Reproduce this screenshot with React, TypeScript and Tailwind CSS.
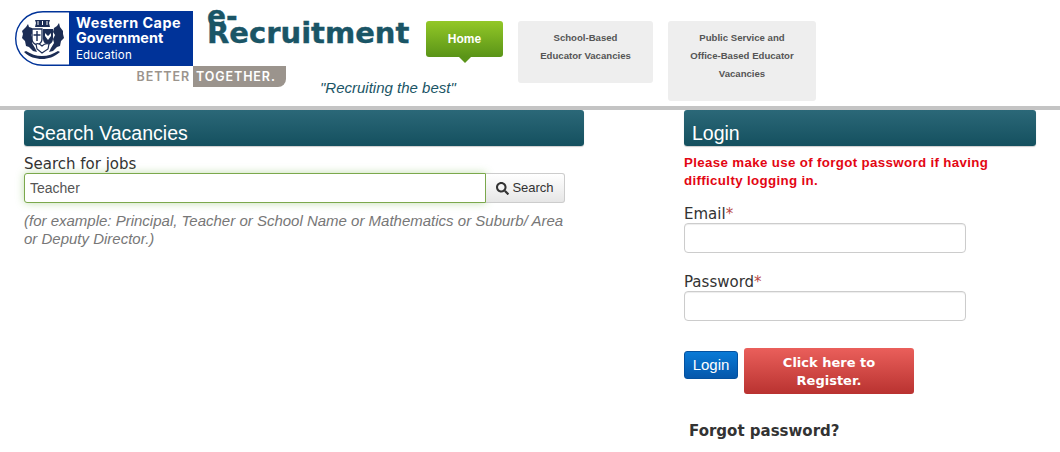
import React from "react";
import { FaSearch } from "react-icons/fa";

const Crest = () => (
  <svg viewBox="0 0 54 55" className="w-[54px] h-[55px] shrink-0">
    <rect width="54" height="55" fill="#fff" />
    <path d="M54 0.7H28C12 0.7 0.7 13 0.7 27.5S12 54.3 28 54.3H54" fill="#fff" stroke="#003399" strokeWidth="1.4" />
    {/* supporters */}
    <path d="M7 20l4-4 2-3 1 3 3 1 1 4-2 3 2 4-1 4 3 5 2 4-4-1-4-4-3-1-1-5-3-3 1-4Z" fill="#1c2d55" />
    <path d="M48 20l-3-4-1-4-2 3-3 2-1 4 2 3-2 4 1 4-3 5-2 4 4-1 4-4 3-1 1-5 3-3-1-4Z" fill="#1c2d55" />
    {/* crown */}
    <path d="M20 9h15l-1 3 1 4H20l1-4Z" fill="#1c2d55" />
    <path d="M23 10v4M27.500 10v4M32 10v4" stroke="#fff" strokeWidth="1" />
    {/* shields */}
    <path d="M17 18h10v10c0 3-2 5-5 6-3-1-5-3-5-6Z" fill="#fff" stroke="#1c2d55" strokeWidth="1.3" />
    <path d="M28 18h10v10c0 3-2 5-5 6-3-1-5-3-5-6Z" fill="#1c2d55" />
    <path d="M22 20v10M18.500 24h7" stroke="#1c2d55" strokeWidth="1.4" />
    <path d="M30 22l3 3 3-3v3l-3 4-3-4Z" fill="#fff" />
    <path d="M21 33c2-1 4 0 6 2 2-2 4-3 7-2l-1 5-6 4-5-4Z" fill="#fff" stroke="#1c2d55" strokeWidth="1.2" />
    {/* motto ribbon */}
    <path d="M9 41c5 5 12 7 18 7s12-2 18-7l-2-1c-5 3-10 5-16 5s-11-2-16-5Z" fill="#1c2d55" />
  </svg>
);

const PanelHeading = ({ title }: { title: string }) => (
  <div className="h-9 rounded-[3px] bg-gradient-to-b from-[#2b6878] to-[#14505f] pl-2 pt-[9px] text-[19.5px] leading-[28px] text-white font-['Liberation_Sans',sans-serif] shadow-[0_1px_1px_rgba(0,0,0,0.2)]">
    {title}
  </div>
);

const Field = ({ label, className }: { label: string; className: string }) => (
  <div className={className}>
    <div className="pt-[2px] text-[15px] leading-[17px] text-[#333] font-['DejaVu_Sans',sans-serif]">
      {label}
      <span className="text-[#b94a48]">*</span>
    </div>
    <div className="h-[30px] w-[282px] rounded-[4px] border border-[#ccc] bg-white shadow-[inset_0_1px_1px_rgba(0,0,0,0.075)]" />
  </div>
);

export default function App() {
  return (
    <div className="w-[1060px] h-[452px] overflow-hidden bg-white font-['Liberation_Sans',sans-serif]">
      {/* Header */}
      <header className="h-[110px] border-b-[4px] border-[#c4c4c4] flex items-start">
        <div className="ml-[15px] mt-[11px] w-[271px] shrink-0">
          <div className="flex w-[178px]">
            <Crest />
            <div className="flex-1 bg-[#003399] text-white pl-[7px] pt-[4px] font-['Inter',sans-serif]">
              <div className="text-[14.4px] font-bold leading-[15px] tracking-[0.45px] whitespace-nowrap">Western Cape</div>
              <div className="text-[14.4px] font-bold leading-[15px]">Government</div>
              <div className="text-[11.5px] leading-[15px] mt-[3px] tracking-[0.2px]">Education</div>
            </div>
          </div>
          <div className="flex h-[21px] font-['Inter',sans-serif] text-[12.5px] font-semibold tracking-[0.9px] leading-[21px]">
            <div className="w-[178px] text-right pr-[3px] text-[#9b948d]">BETTER</div>
            <div className="flex-1 bg-[#9b948d] text-white pl-[3px] rounded-br-[8px] whitespace-nowrap">TOGETHER.</div>
          </div>
        </div>

        <div className="w-[219px] ml-[-79px] mt-[9px] shrink-0">
          <div className="font-['DejaVu_Sans',sans-serif] font-bold text-[29px] leading-[16px] text-[#1a5566] whitespace-nowrap [-webkit-text-stroke:0.4px_#1a5566]">
            <div className="text-[28px]">e-</div>
            <div>Recruitment</div>
          </div>
          <div className="ml-[113px] mt-[38px] italic text-[15px] leading-[18px] text-[#1a5566] whitespace-nowrap">"Recruiting the best"</div>
        </div>

        <div className="ml-0 mt-[21px] w-[77px] relative shrink-0">
          <div className="h-9 rounded-[3px] bg-gradient-to-b from-[#93c827] to-[#5a9418] text-white text-[12px] font-bold leading-9 text-center">Home</div>
          <div className="absolute left-[33px] top-9 w-0 h-0 border-x-[6px] border-x-transparent border-t-[6px] border-t-[#5a9418]" />
        </div>

        <div className="ml-[15px] mt-[21px] h-[62px] w-[135px] rounded-[3px] bg-[#eee] text-center text-[9.6px] font-bold leading-[18px] text-[#555] pt-2 shrink-0">
          School-Based
          <br />
          Educator Vacancies
        </div>

        <div className="ml-[15px] mt-[21px] h-[80px] w-[148px] rounded-[3px] bg-[#eee] text-center text-[9.6px] font-bold leading-[18px] text-[#555] pt-2 shrink-0">
          Public Service and
          <br />
          Office-Based Educator
          <br />
          Vacancies
        </div>
      </header>

      {/* Body */}
      <main className="flex">
        <section className="ml-6 w-[560px] shrink-0">
          <PanelHeading title="Search Vacancies" />
          <div className="mt-[9px] text-[15px] leading-[18px] text-[#333] font-['DejaVu_Sans',sans-serif]">Search for jobs</div>
          <div className="flex">
            <div className="h-[30px] w-[462px] rounded-l-[3px] border border-[#7ba84c] bg-white pl-[5px] text-[14px] leading-[28px] text-[#555] shadow-[0_0_8px_rgba(102,175,60,0.4)] font-['Liberation_Sans',sans-serif]">
              Teacher
            </div>
            <div className="h-[30px] w-[79px] rounded-r-[3px] border border-l-0 border-[#ccc] bg-gradient-to-b from-white to-[#e6e6e6] flex items-center justify-center gap-[3px] text-[13px] text-[#333]">
              <FaSearch className="w-[13px] h-[13px]" />
              Search
            </div>
          </div>
          <p className="mt-[9px] text-[15px] leading-[18px] italic text-[#777]">
            (for example: Principal, Teacher or School Name or Mathematics or Suburb/ Area
            <br />
            or Deputy Director.)
          </p>
        </section>

        <section className="ml-[100px] w-[352px] shrink-0">
          <PanelHeading title="Login" />
          <p className="mt-2 text-[13.3px] leading-[18px] font-bold text-[#e30613] tracking-[0.35px] whitespace-nowrap">
            Please make use of forgot password if having
            <br />
            difficulty logging in.
          </p>
          <Field label="Email" className="mt-[14px]" />
          <Field label="Password" className="mt-[19px]" />

          <div className="mt-[27px] flex items-start gap-[6px]">
            <div className="mt-[3px] h-[28px] w-[54px] rounded-[3px] bg-gradient-to-b from-[#0a7ad6] to-[#0557ab] border border-[#04519f] text-white text-[15px] leading-[26px] text-center font-['Liberation_Sans',sans-serif]">
              Login
            </div>
            <div className="h-[46px] w-[170px] rounded-[3px] bg-gradient-to-b from-[#ea5f5b] to-[#b93230] text-white text-center text-[13px] font-bold leading-[18px] pt-[6px] px-[30px] font-['DejaVu_Sans',sans-serif]">
              Click here to Register.
            </div>
          </div>
          <div className="mt-[27px] ml-[5px] text-[15px] font-bold leading-5 text-[#333] font-['DejaVu_Sans',sans-serif]">Forgot password?</div>
        </section>
      </main>
    </div>
  );
}
